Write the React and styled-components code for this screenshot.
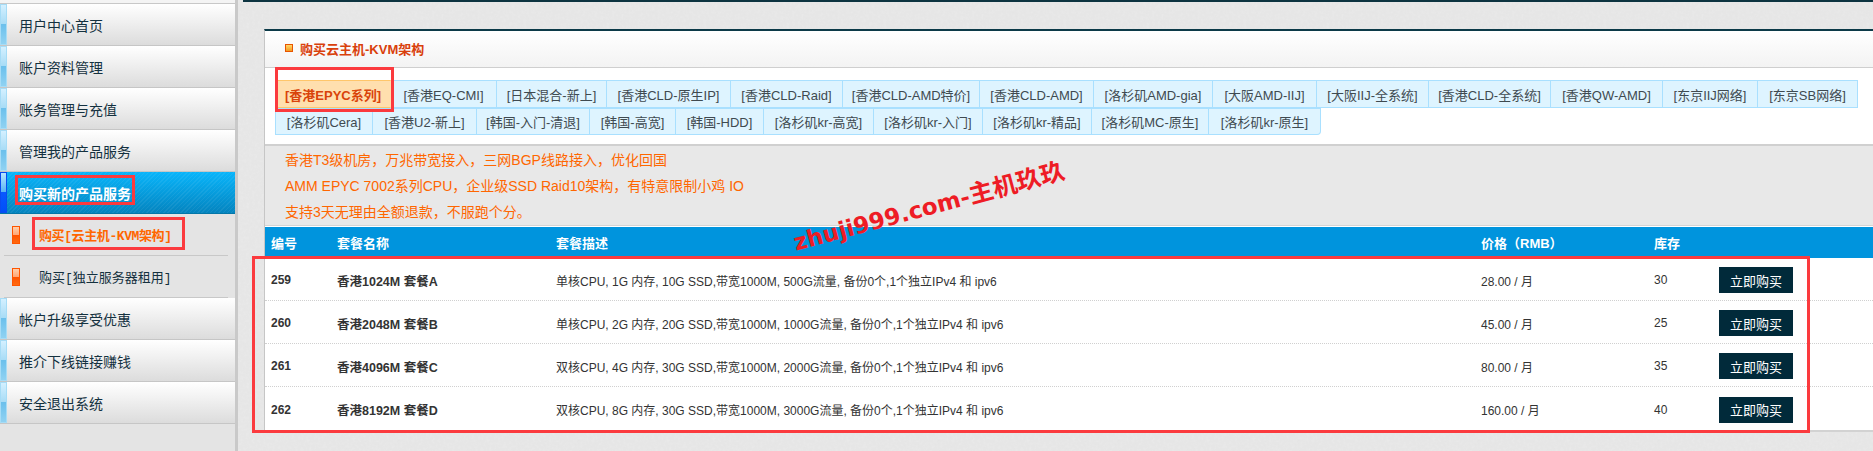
import React from "react";
import styled, { createGlobalStyle } from "styled-components";

const CJK = '"Noto Sans CJK SC"';
const SANS = `"Liberation Sans", ${CJK}, sans-serif`;

const noise = `url("data:image/svg+xml,%3Csvg xmlns='http://www.w3.org/2000/svg' width='180' height='180'%3E%3Cfilter id='n'%3E%3CfeTurbulence type='fractalNoise' baseFrequency='0.35' numOctaves='2'/%3E%3CfeColorMatrix values='0 0 0 0 0.5 0 0 0 0 0.5 0 0 0 0 0.5 0 0 0 0.35 0'/%3E%3C/filter%3E%3Crect width='180' height='180' filter='url(%23n)' opacity='0.3'/%3E%3C/svg%3E")`;

const Global = createGlobalStyle`
  html, body { margin: 0; padding: 0; height: 451px; overflow: hidden; background: #e9e9e9; }
  * { box-sizing: border-box; }
`;

const Page = styled.div`
  position: relative;
  display: flex;
  width: 1873px;
  height: 451px;
  overflow: hidden;
  font-family: ${SANS};
`;

const Sidebar = styled.nav`
  flex: 0 0 238px;
  height: 100%;
  background: #e4e4e4;
  border-right: 3px solid #c9c9c9;
`;

const TopRule = styled.div`
  height: 4px;
  background: #f4f4f4;
  border-bottom: 1px solid #c8c8c8;
`;

const MenuItem = styled.div`
  display: flex;
  align-items: center;
  height: 42px;
  font-size: 14px;
  color: ${(p) => (p.$active ? "#fff" : "#14313f")};
  font-weight: ${(p) => (p.$active ? 700 : 400)};
  border-bottom: 1px solid ${(p) => (p.$active ? "#0477a8" : "#c6c6c6")};
  background: ${(p) =>
    p.$active
      ? "repeating-linear-gradient(135deg, rgba(255,255,255,.06) 0 1px, transparent 1px 3px), linear-gradient(#09b5fb, #0484bf)"
      : "linear-gradient(#ffffff, #dcdcdc)"};
`;

const Stripe = styled.span`
  flex: 0 0 7px;
  height: 100%;
  margin-right: 12px;
  border: 1px solid ${(p) => (p.$active ? "#0a4cf0" : "#a6dcf6")};
  background: ${(p) =>
    p.$active
      ? "linear-gradient(#b8e6ff 0%, #58b4f4 48%, #0a58ff 50%, #0050f8 100%)"
      : "linear-gradient(#d4f0ff 0%, #a8dcf6 48%, #6cc0ec 50%, #90d2f2 100%)"};
`;

const SubItem = styled.div`
  display: flex;
  align-items: center;
  height: 42px;
  margin: 0 7px 0 4px;
  padding-left: 8px;
  border-bottom: 1px solid #c8c8c8;
  font-family: "Liberation Mono", ${CJK}, monospace;
  font-size: 13px;
  letter-spacing: ${(p) => (p.$active ? "-0.4px" : "0")};
  font-weight: ${(p) => (p.$active ? 700 : 400)};
  color: ${(p) => (p.$active ? "#ff6600" : "#14313f")};
`;

const Pill = styled.span`
  flex: 0 0 8px;
  height: 18px;
  margin-right: 19px;
  border: 1px solid #ff5500;
  background: linear-gradient(#ffd0ac 0%, #ffa877 48%, #ff5200 50%, #ff6a10 100%);
`;

const Main = styled.main`
  flex: 1;
  min-width: 0;
  background-color: #e9e9e9;
  background-image: ${noise};
`;

const TopBar = styled.div`
  height: 2px;
  margin-left: 5px;
  background: #0c3340;
`;

const Panel = styled.section`
  margin: 27px 0 0 26px;
  border-left: 1px solid #c6c6c6;
  border-top: 2px solid #0c3a48;
  border-bottom: 2px solid #d2d2d2;
  background: #fff;
`;

const TitleRow = styled.header`
  display: flex;
  align-items: center;
  height: 37px;
  padding: 0 0 2px 20px;
  background: linear-gradient(#ffffff, #f3f3f3);
  border-bottom: 1px solid #cfcfcf;
`;

const TitleIcon = styled.span`
  width: 8px;
  height: 8px;
  margin-right: 7px;
  border: 1px solid #e85400;
  background: linear-gradient(#ffd86a, #f39a20);
`;

const Title = styled.h2`
  margin: 0;
  font-size: 13px;
  font-weight: 700;
  color: #d9400b;
`;

const TabArea = styled.div`
  height: 78px;
  padding: 12px 0 0 10px;
  border-bottom: 2px solid #d0d0d0;
`;

const TabRow = styled.div`
  display: flex;
  height: ${(p) => p.$h}px;
`;

const Tab = styled.a`
  display: flex;
  align-items: center;
  justify-content: center;
  white-space: nowrap;
  font-size: 13px;
  border: 1px solid ${(p) => (p.$active ? "#ffc66a" : "#a9e0ff")};
  border-left: 0;
  border-right-color: ${(p) => (p.$active ? "#ffdfae" : "#a9e0ff")};
  border-radius: ${(p) => (p.$last ? "0 0 4px 0" : "0")};
  background: ${(p) => (p.$active ? "#ffdfae" : "#def4ff")};
  color: ${(p) => (p.$active ? "#d9430a" : "#3f4a50")};
  font-weight: ${(p) => (p.$active ? 700 : 400)};
  &:first-child {
    border-left: 1px solid ${(p) => (p.$active ? "#ffdfae" : "#a9e0ff")};
  }
`;

const Info = styled.div`
  height: 80px;
  padding: 1px 0 0 20px;
  background: #e8e8e8;
  border-bottom: 1px solid #d4d4d4;
  color: #ff6600;
  font-size: 14px;
  line-height: 26px;
`;

const InfoLine = styled.div``;

const Grid = styled.div`
  display: grid;
  grid-template-columns: 66px 219px 925px 173px 65px 1fr;
  align-items: center;
  padding-left: 6px;
`;

const HeadRow = styled(Grid)`
  height: 31px;
  margin-top: 1px;
  background: #0094dd;
  color: #fff;
  font-size: 13px;
  font-weight: 700;
`;

const BodyRow = styled(Grid)`
  height: 43px;
  padding-top: 2px;
  font-size: 12px;
  color: #333;
  border-bottom: 1px dotted #d0d0d0;
  &:last-child { border-bottom: 0; }
`;

const StrongId = styled.span`
  font-weight: 700;
`;

const StrongName = styled.span`
  font-weight: 700;
  font-size: 12.5px;
`;

const Buy = styled.button`
  width: 74px;
  height: 26px;
  padding: 0;
  border: 0;
  background: #012a3a;
  color: #fff;
  font-family: ${SANS};
  font-size: 13px;
`;

const Mark = styled.div`
  position: absolute;
  left: ${(p) => p.$x}px;
  top: ${(p) => p.$y}px;
  width: ${(p) => p.$w}px;
  height: ${(p) => p.$h}px;
  border: 3px solid #fb3a3e;
  pointer-events: none;
`;

const Watermark = styled.div`
  position: absolute;
  left: 794px;
  top: 227px;
  white-space: nowrap;
  font-family: "DejaVu Sans", ${CJK}, sans-serif;
  font-size: 23px;
  font-weight: 700;
  line-height: 32px;
  color: #ee1c25;
  transform: rotate(-15deg);
  transform-origin: left center;
`;

const WatermarkCjk = styled.span`
  font-size: 24.5px;
`;

const menuTop = ["用户中心首页", "账户资料管理", "账务管理与充值", "管理我的产品服务"];
const menuBottom = ["帐户升级享受优惠", "推介下线链接赚钱", "安全退出系统"];

const row1 = [
  ["[香港EPYC系列]", 116], ["[香港EQ-CMI]", 106], ["[日本混合-新上]", 110], ["[香港CLD-原生IP]", 124],
  ["[香港CLD-Raid]", 112], ["[香港CLD-AMD特价]", 137], ["[香港CLD-AMD]", 114], ["[洛杉矶AMD-gia]", 119],
  ["[大阪AMD-IIJ]", 104], ["[大阪IIJ-全系统]", 112], ["[香港CLD-全系统]", 122], ["[香港QW-AMD]", 112],
  ["[东京IIJ网络]", 95], ["[东京SB网络]", 100],
];
const row2 = [
  ["[洛杉矶Cera]", 98], ["[香港U2-新上]", 104], ["[韩国-入门-清退]", 113], ["[韩国-高宽]", 86],
  ["[韩国-HDD]", 88], ["[洛杉矶kr-高宽]", 110], ["[洛杉矶kr-入门]", 109], ["[洛杉矶kr-精品]", 109],
  ["[洛杉矶MC-原生]", 117], ["[洛杉矶kr-原生]", 112],
];

const plans = [
  ["259", "香港1024M 套餐A", "单核CPU, 1G 内存, 10G SSD,带宽1000M, 500G流量, 备份0个,1个独立IPv4 和 ipv6", "28.00 / 月", "30"],
  ["260", "香港2048M 套餐B", "单核CPU, 2G 内存, 20G SSD,带宽1000M, 1000G流量, 备份0个,1个独立IPv4 和 ipv6", "45.00 / 月", "25"],
  ["261", "香港4096M 套餐C", "双核CPU, 4G 内存, 30G SSD,带宽1000M, 2000G流量, 备份0个,1个独立IPv4 和 ipv6", "80.00 / 月", "35"],
  ["262", "香港8192M 套餐D", "双核CPU, 8G 内存, 30G SSD,带宽1000M, 3000G流量, 备份0个,1个独立IPv4 和 ipv6", "160.00 / 月", "40"],
];

export default function App() {
  return (
    <Page>
      <Global />
      <Sidebar>
        <TopRule />
        {menuTop.map((m) => (
          <MenuItem key={m}><Stripe />{m}</MenuItem>
        ))}
        <MenuItem $active><Stripe $active />购买新的产品服务</MenuItem>
        <SubItem $active><Pill />购买[云主机-KVM架构]</SubItem>
        <SubItem><Pill />购买[独立服务器租用]</SubItem>
        {menuBottom.map((m) => (
          <MenuItem key={m}><Stripe />{m}</MenuItem>
        ))}
      </Sidebar>
      <Main>
        <TopBar />
        <Panel>
          <TitleRow>
            <TitleIcon />
            <Title>购买云主机-KVM架构</Title>
          </TitleRow>
          <TabArea>
            <TabRow $h={28}>
              {row1.map(([t, w], i) => (
                <Tab key={t} $active={i === 0} style={{ width: w }}>{t}</Tab>
              ))}
            </TabRow>
            <TabRow $h={27}>
              {row2.map(([t, w], i) => (
                <Tab key={t} $last={i === row2.length - 1} style={{ width: w }}>{t}</Tab>
              ))}
            </TabRow>
          </TabArea>
          <Info>
            <InfoLine>香港T3级机房，万兆带宽接入，三网BGP线路接入，优化回国</InfoLine>
            <InfoLine>AMM EPYC 7002系列CPU，企业级SSD Raid10架构，有特意限制小鸡 IO</InfoLine>
            <InfoLine>支持3天无理由全额退款，不服跑个分。</InfoLine>
          </Info>
          <HeadRow>
            <span>编号</span>
            <span>套餐名称</span>
            <span>套餐描述</span>
            <span>价格（RMB）</span>
            <span>库存</span>
            <span />
          </HeadRow>
          {plans.map(([id, name, desc, price, stock]) => (
            <BodyRow key={id}>
              <StrongId>{id}</StrongId>
              <StrongName>{name}</StrongName>
              <span>{desc}</span>
              <span>{price}</span>
              <span>{stock}</span>
              <Buy>立即购买</Buy>
            </BodyRow>
          ))}
        </Panel>
      </Main>
      <Watermark>zhuji999.com-<WatermarkCjk>主机玖玖</WatermarkCjk></Watermark>
      <Mark $x={275} $y={67} $w={119} $h={45} />
      <Mark $x={15} $y={175} $w={120} $h={30} />
      <Mark $x={32} $y={217} $w={153} $h={33} />
      <Mark $x={252} $y={256} $w={1558} $h={177} />
    </Page>
  );
}
